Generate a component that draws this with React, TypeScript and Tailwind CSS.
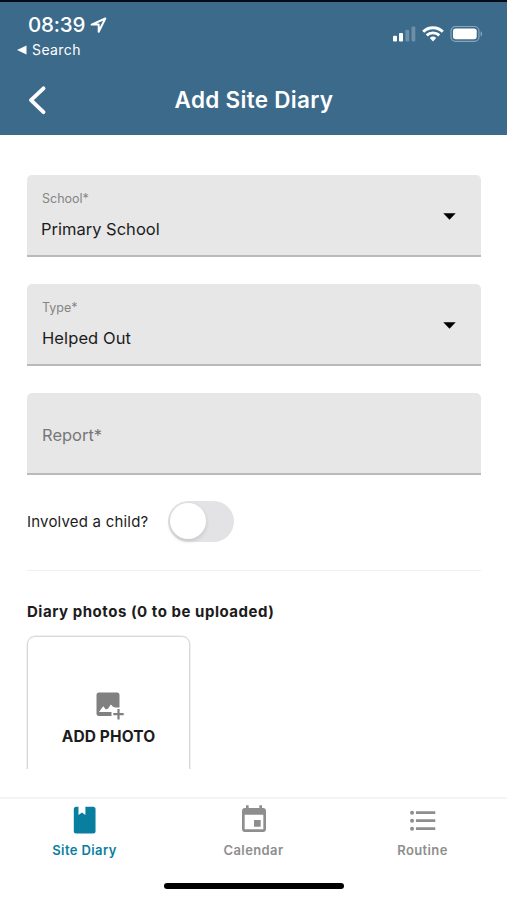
import React from "react";

function StatusIcons() {
  return (
    <svg width="92" height="18" viewBox="0 0 92 18" className="block">
      <rect x="2" y="10.8" width="4" height="5.6" rx="1" fill="#fff" />
      <rect x="8" y="8" width="4" height="8.4" rx="1" fill="#fff" />
      <rect x="14.4" y="4.8" width="3.8" height="11.6" rx="1" fill="#fff" opacity=".25" />
      <rect x="20.5" y="1.6" width="3.8" height="14.8" rx="1" fill="#fff" opacity=".25" />
      <g fill="none" stroke="#fff" strokeWidth="2.9">
        <path d="M32.2 6.7a14 14 0 0 1 19.6 0" />
        <path d="M35.7 10.4a9.1 9.1 0 0 1 12.6 0" />
      </g>
      <path d="M38.8 13.1a4.7 4.7 0 0 1 6.4 0L42 16.5z" fill="#fff" />
      <rect x="60" y="1.5" width="28" height="14.8" rx="4.5" fill="none" stroke="#fff" strokeWidth="1.2" opacity=".4" />
      <rect x="62" y="3.6" width="23.7" height="10.6" rx="2.6" fill="#fff" />
      <path d="M89.6 6.3c2 .7 2 4.5 0 5.2z" fill="#fff" opacity=".4" />
    </svg>
  );
}

function Header() {
  return (
    <header className="flex h-[135px] flex-col border-t-2 border-[#030a18] bg-[#3c6a8b] text-white">
      <div className="flex h-[62px] justify-between pl-[17px] pr-[24px]">
        <div className="pt-[11px]">
          <div className="flex items-center pl-[11px]">
            <span className="text-[20.5px] font-medium leading-6 tracking-[-0.2px]">08:39</span>
            <svg width="17" height="17" viewBox="0 0 17 17" className="ml-[5px]" fill="none" stroke="#fff" strokeWidth="2" strokeLinejoin="round">
              <path d="M15.3 1.5 1.6 7.6h7.1v7.2z" />
            </svg>
          </div>
          <div className="mt-[2px] flex items-center">
            <svg width="10" height="10" viewBox="0 0 10 10">
              <path d="M0 5 9.5.6v8.8z" fill="#fff" />
            </svg>
            <span className="ml-[5px] text-[14px] leading-[22px] tracking-[0.4px]">Search</span>
          </div>
        </div>
        <div className="pt-[23px]">
          <StatusIcons />
        </div>
      </div>
      <div className="grid h-[71px] grid-cols-[60px_1fr_59px] items-center">
        <svg width="20" height="30" viewBox="0 0 20 30" className="ml-[27px]" fill="none" stroke="#fff" strokeWidth="3.9" strokeLinecap="round" strokeLinejoin="round">
          <path d="M16.5 3.3 4 15.2l12.5 11.9" />
        </svg>
        <h1 className="text-center text-[22.5px] font-semibold leading-7 tracking-[0.3px]">Add Site Diary</h1>
      </div>
    </header>
  );
}

function SelectField({ label, value, className }: { label: string; value: string; className: string }) {
  return (
    <div className="flex h-[82px] items-center justify-between rounded-t-[5px] border-b-2 border-[#bababa] bg-[#e7e7e7] pr-[25px]">
      <div className="pl-[15px]">
        <div className="text-[12.5px] leading-4 text-[#858585]">{label}</div>
        <div className={className}>{value}</div>
      </div>
      <svg width="13" height="7" viewBox="0 0 13 7" className="mt-[3px]">
        <path d="M.3.3h12.4L6.5 6.7z" fill="#000" />
      </svg>
    </div>
  );
}

function Tab({ label, className, children }: { label: string; className: string; children: React.ReactNode }) {
  return (
    <div className={className}>
      <svg width="32" height="32" viewBox="0 0 24 24" fill="currentColor">
        {children}
      </svg>
      <span className="mt-[4px] text-[13px] font-semibold leading-5 tracking-[0.4px]">{label}</span>
    </div>
  );
}

export default function App() {
  return (
    <div className="flex h-[900px] w-[507px] flex-col overflow-hidden bg-white font-['Inter','Liberation_Sans',sans-serif] text-[#1c1c1c]">
      <Header />
      <main className="h-[634px] overflow-hidden px-[27px] pt-10">
        <div className="flex w-[454px] flex-col gap-[27px]">
          <SelectField label="School*" value="Primary School" className="-ml-px mt-[12px] text-[16.5px] leading-5" />
          <SelectField label="Type*" value="Helped Out" className="mt-[12px] text-[16.5px] leading-5 tracking-[0.1px]" />
          <div className="flex h-[82px] items-center rounded-t-[5px] border-b-2 border-[#bababa] bg-[#e7e7e7] pl-[15px] pt-1 text-[16.5px] text-[#777]">
            Report*
          </div>
        </div>
        <div className="mt-[25px] flex h-[42px] items-center">
          <span className="w-[141px] whitespace-nowrap pt-[2px] text-[15px] tracking-[0.2px]">Involved a child?</span>
          <div className="flex h-[41px] w-[66px] items-center rounded-full bg-[#e3e3e5] p-[2px]">
            <div className="h-[36px] w-[36px] rounded-full bg-white shadow-[0_2px_4px_rgba(0,0,0,0.14)]" />
          </div>
        </div>
        <div className="mt-[28px] w-[454px] border-t border-[#f0f0f0]" />
        <h2 className="mt-[30px] text-[15px] font-bold leading-[22px] tracking-[0.53px]">Diary photos (0 to be uploaded)</h2>
        <div className="mt-[13px] flex h-[164px] w-[163px] flex-col items-center rounded-lg border-[1.5px] border-[#d8d8d8] pt-[55px] shadow-[0_0_0_0.5px_#e4e4e4]">
          <svg width="28" height="28" viewBox="0 0 28 28" className="ml-[2px]">
            <path
              fillRule="evenodd"
              d="M3 .5h18A2.5 2.5 0 0 1 23.5 3v13h-3v2.5h-5V24H3a2.5 2.5 0 0 1-2.5-2.5V3A2.5 2.5 0 0 1 3 .5zM3 20h12.5v-1.5h5V16h3v-.5h-4.2l-2.3-.8-2.2-2.2-2.6 3.9-2.4 1.2-2.5-3.3-1.8 2.3z"
              fill="#808080"
            />
            <path d="M22.5 17v10.4M17.3 22.2h10.4" stroke="#808080" strokeWidth="2.2" />
          </svg>
          <span className="mt-[7px] text-[15.5px] font-bold leading-5 tracking-[0.1px]">ADD PHOTO</span>
        </div>
      </main>
      <nav className="mt-[28px] flex h-[103px] flex-col items-center border-t-2 border-[#f4f4f4]">
        <div className="grid w-full grid-cols-3 pt-[5px]">
          <Tab label="Site Diary" className="flex flex-col items-center text-[#087f9e]">
            <path d="M5.2 2h1.9v6.3l2.6-2 2.6 2V2h5.9c1 0 1.7.7 1.7 1.7v16.8c0 1-.7 1.7-1.7 1.7H5.3c-1 0-1.7-.7-1.7-1.7V3.7C3.6 2.8 4.3 2 5.2 2z" />
          </Tab>
          <Tab label="Calendar" className="flex flex-col items-center text-[#8e8e8e]">
            <path d="M17 12h-5v5h5v-5zM16 1v2H8V1H6v2H5c-1.1 0-2 .9-2 2v14c0 1.1.9 2 2 2h14c1.1 0 2-.9 2-2V5c0-1.1-.9-2-2-2h-1V1h-2zm3 18H5V8h14v11z" />
          </Tab>
          <Tab label="Routine" className="flex flex-col items-center text-[#8e8e8e]">
            <path d="M6.7 5.5h14.5v2H6.7zM6.7 11.5h14.5v2H6.7zM6.7 17.5h14.5v2H6.7z" />
            <circle cx="3.8" cy="6.5" r="1.5" />
            <circle cx="3.8" cy="12.5" r="1.5" />
            <circle cx="3.8" cy="18.5" r="1.5" />
          </Tab>
        </div>
        <div className="ml-px mt-[23px] h-[6px] w-[180px] rounded-full bg-black" />
      </nav>
    </div>
  );
}
